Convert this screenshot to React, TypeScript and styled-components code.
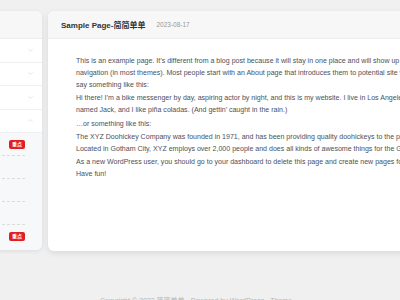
import styled, { createGlobalStyle } from "styled-components";
import { ChevronDown, ChevronUp } from "lucide-react";

const GlobalStyle = createGlobalStyle`
  html, body {
    margin: 0;
    padding: 0;
    background: #f0f0f0;
  }
  body {
    font-family: "Liberation Sans", "Noto Sans CJK SC", sans-serif;
  }
`;

const menuRows = [false, false, false, true];
const subItems = [true, false, false, false, true];

const paragraphs = [
  [
    "This is an example page. It’s different from a blog post because it will stay in one place and will show up in your site",
    "navigation (in most themes). Most people start with an About page that introduces them to potential site visitors. It might",
    "say something like this:",
  ],
  [
    "Hi there! I’m a bike messenger by day, aspiring actor by night, and this is my website. I live in Los Angeles, have a great dog,",
    "named Jack, and I like piña coladas. (And gettin’ caught in the rain.)",
  ],
  ["…or something like this:"],
  [
    "The XYZ Doohickey Company was founded in 1971, and has been providing quality doohickeys to the public ever since.",
    "Located in Gotham City, XYZ employs over 2,000 people and does all kinds of awesome things for the Gotham community.",
  ],
  [
    "As a new WordPress user, you should go to your dashboard to delete this page and create new pages for your content.",
    "Have fun!",
  ],
];

export default function App() {
  return (
    <>
      <GlobalStyle />
      <Viewport>
        <Columns>
          <SideCard>
            <SideHeader />
            {menuRows.map((open, i) => (
              <MenuRow key={i}>
                {open ? (
                  <ChevronUp size={7} strokeWidth={1.6} />
                ) : (
                  <ChevronDown size={7} strokeWidth={1.6} />
                )}
              </MenuRow>
            ))}
            <SubList>
              {subItems.map((hot, i) => (
                <SubItem key={i} $last={i === subItems.length - 1}>
                  {hot && <Badge>重点</Badge>}
                </SubItem>
              ))}
            </SubList>
          </SideCard>

          <MainCard>
            <MainHeader>
              <Title>Sample Page-简简单单</Title>
              <DateText>2023-08-17</DateText>
            </MainHeader>
            <Article>
              {paragraphs.map((lines, i) => (
                <Para key={i}>
                  {lines.map((line) => (
                    <Line key={line}>{line}</Line>
                  ))}
                </Para>
              ))}
            </Article>
          </MainCard>
        </Columns>
        <Footer>Copyright © 2023 简简单单 · Powered by WordPress · Theme</Footer>
      </Viewport>
    </>
  );
}

const Viewport = styled.div`
  width: 400px;
  height: 300px;
  overflow: hidden;
`;

const Columns = styled.div`
  display: flex;
  align-items: flex-start;
  gap: 6px;
  padding-top: 11px;
  margin-left: -158px;
`;

const SideCard = styled.div`
  flex: 0 0 200px;
  background: #fff;
  border-radius: 6px;
  overflow: hidden;
  box-shadow: 0 1px 5px rgba(0, 0, 0, 0.09);
`;

const SideHeader = styled.div`
  height: 28px;
  background: #f7f7f7;
  border-bottom: 1px solid #ececec;
  box-sizing: border-box;
`;

const MenuRow = styled.div`
  height: 23.5px;
  box-sizing: border-box;
  border-bottom: 1px solid #efefef;
  display: flex;
  align-items: center;
  justify-content: flex-end;
  padding: 0 8px 0 12px;

  svg {
    color: #c4c4c4;
  }
`;

const SubList = styled.div`
  background: #f7f8fa;
  padding: 0 17px 2px 20px;
`;

const SubItem = styled.div<{ $last: boolean }>`
  height: 23px;
  box-sizing: border-box;
  display: flex;
  align-items: center;
  justify-content: flex-end;
  border-bottom: ${(p) => (p.$last ? "none" : "1px dashed #dcdcdc")};
`;

const Badge = styled.span`
  display: inline-flex;
  align-items: center;
  justify-content: center;
  width: 16px;
  height: 9px;
  border-radius: 2px;
  background: #e0201f;
  color: #fff;
  font-size: 5px;
  font-weight: bold;
  line-height: 1;
`;

const MainCard = styled.div`
  flex: 0 0 640px;
  background: #fff;
  border-radius: 6px;
  overflow: hidden;
  box-shadow: 0 2px 6px rgba(0, 0, 0, 0.1);
`;

const MainHeader = styled.div`
  height: 28px;
  box-sizing: border-box;
  background: #f7f7f7;
  border-bottom: 1px solid #ececec;
  display: flex;
  align-items: center;
  padding-left: 13px;
  gap: 11px;
`;

const Title = styled.span`
  font-size: 8px;
  font-weight: bold;
  color: #333;
`;

const DateText = styled.span`
  font-size: 6.5px;
  color: #999;
`;

const Article = styled.div`
  padding: 16px 28px 0;
  min-height: 196px;
  font-size: 7.05px;
  line-height: 12px;
  color: #4b515c;
`;

const Para = styled.p`
  margin: 0 0 1.3px;
`;

const Line = styled.span`
  display: block;
  white-space: nowrap;
`;

const Footer = styled.div`
  margin-top: 44px;
  padding-right: 8px;
  text-align: center;
  font-size: 7px;
  color: #b5b5b5;
`;
